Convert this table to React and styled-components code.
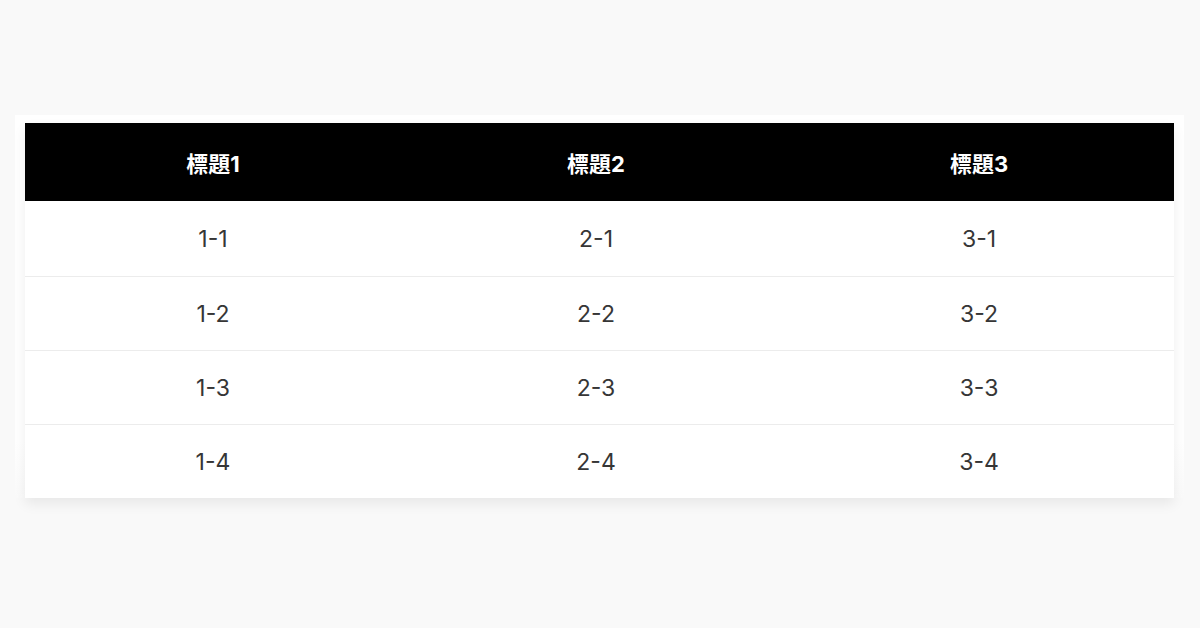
import React from 'react';
import styled, {createGlobalStyle} from 'styled-components';

const GlobalStyle = createGlobalStyle`
    html, body {
        margin: 0;
        padding: 0;
        background: #f9f9f9;
        font-family: Inter, "Noto Sans CJK TC", sans-serif;
    }
`

const Page = styled.div`
    width: 1200px;
    height: 628px;
    padding-top: 115px;
    box-sizing: border-box;
`

const Panel = styled.div`
    margin: 0 16px 0 15px;
    padding: 8px 10px 0 10px;
    background: linear-gradient(#ffffff 85%, #fafafa);
`

const Table = styled.table`
    width: 100%;
    border-collapse: collapse;
    background: #ffffff;
    box-shadow: 0 6px 12px rgba(0, 0, 0, 0.07);
`

const HeadCell = styled.th`
    height: 78px;
    padding: 0 7px 0 0;
    background: #000000;
    color: #ffffff;
    font-size: 22px;
    font-weight: 700;
    text-align: center;
    width: 33.33%;
`

const Row = styled.tr`
    border-top: ${({first}) => first ? 'none' : '1px solid #ececec'};
`

const Cell = styled.td`
    height: ${({first}) => first ? '75px' : '73px'};
    padding: 0 7px 0 0;
    color: #363636;
    font-size: 23px;
    text-align: center;
`

const headers = ['標題1', '標題2', '標題3'];
const rows = [1, 2, 3, 4];

const App = () => {
    return (
        <Page>
            <GlobalStyle />
            <Panel>
                <Table>
                    <thead>
                        <tr>
                            {headers.map(h => <HeadCell key={h}>{h}</HeadCell>)}
                        </tr>
                    </thead>
                    <tbody>
                        {rows.map(r => (
                            <Row key={r} first={r === 1}>
                                <Cell first={r === 1}>1-{r}</Cell>
                                <Cell first={r === 1}>2-{r}</Cell>
                                <Cell first={r === 1}>3-{r}</Cell>
                            </Row>
                        ))}
                    </tbody>
                </Table>
            </Panel>
        </Page>
    )
};

export default App;
